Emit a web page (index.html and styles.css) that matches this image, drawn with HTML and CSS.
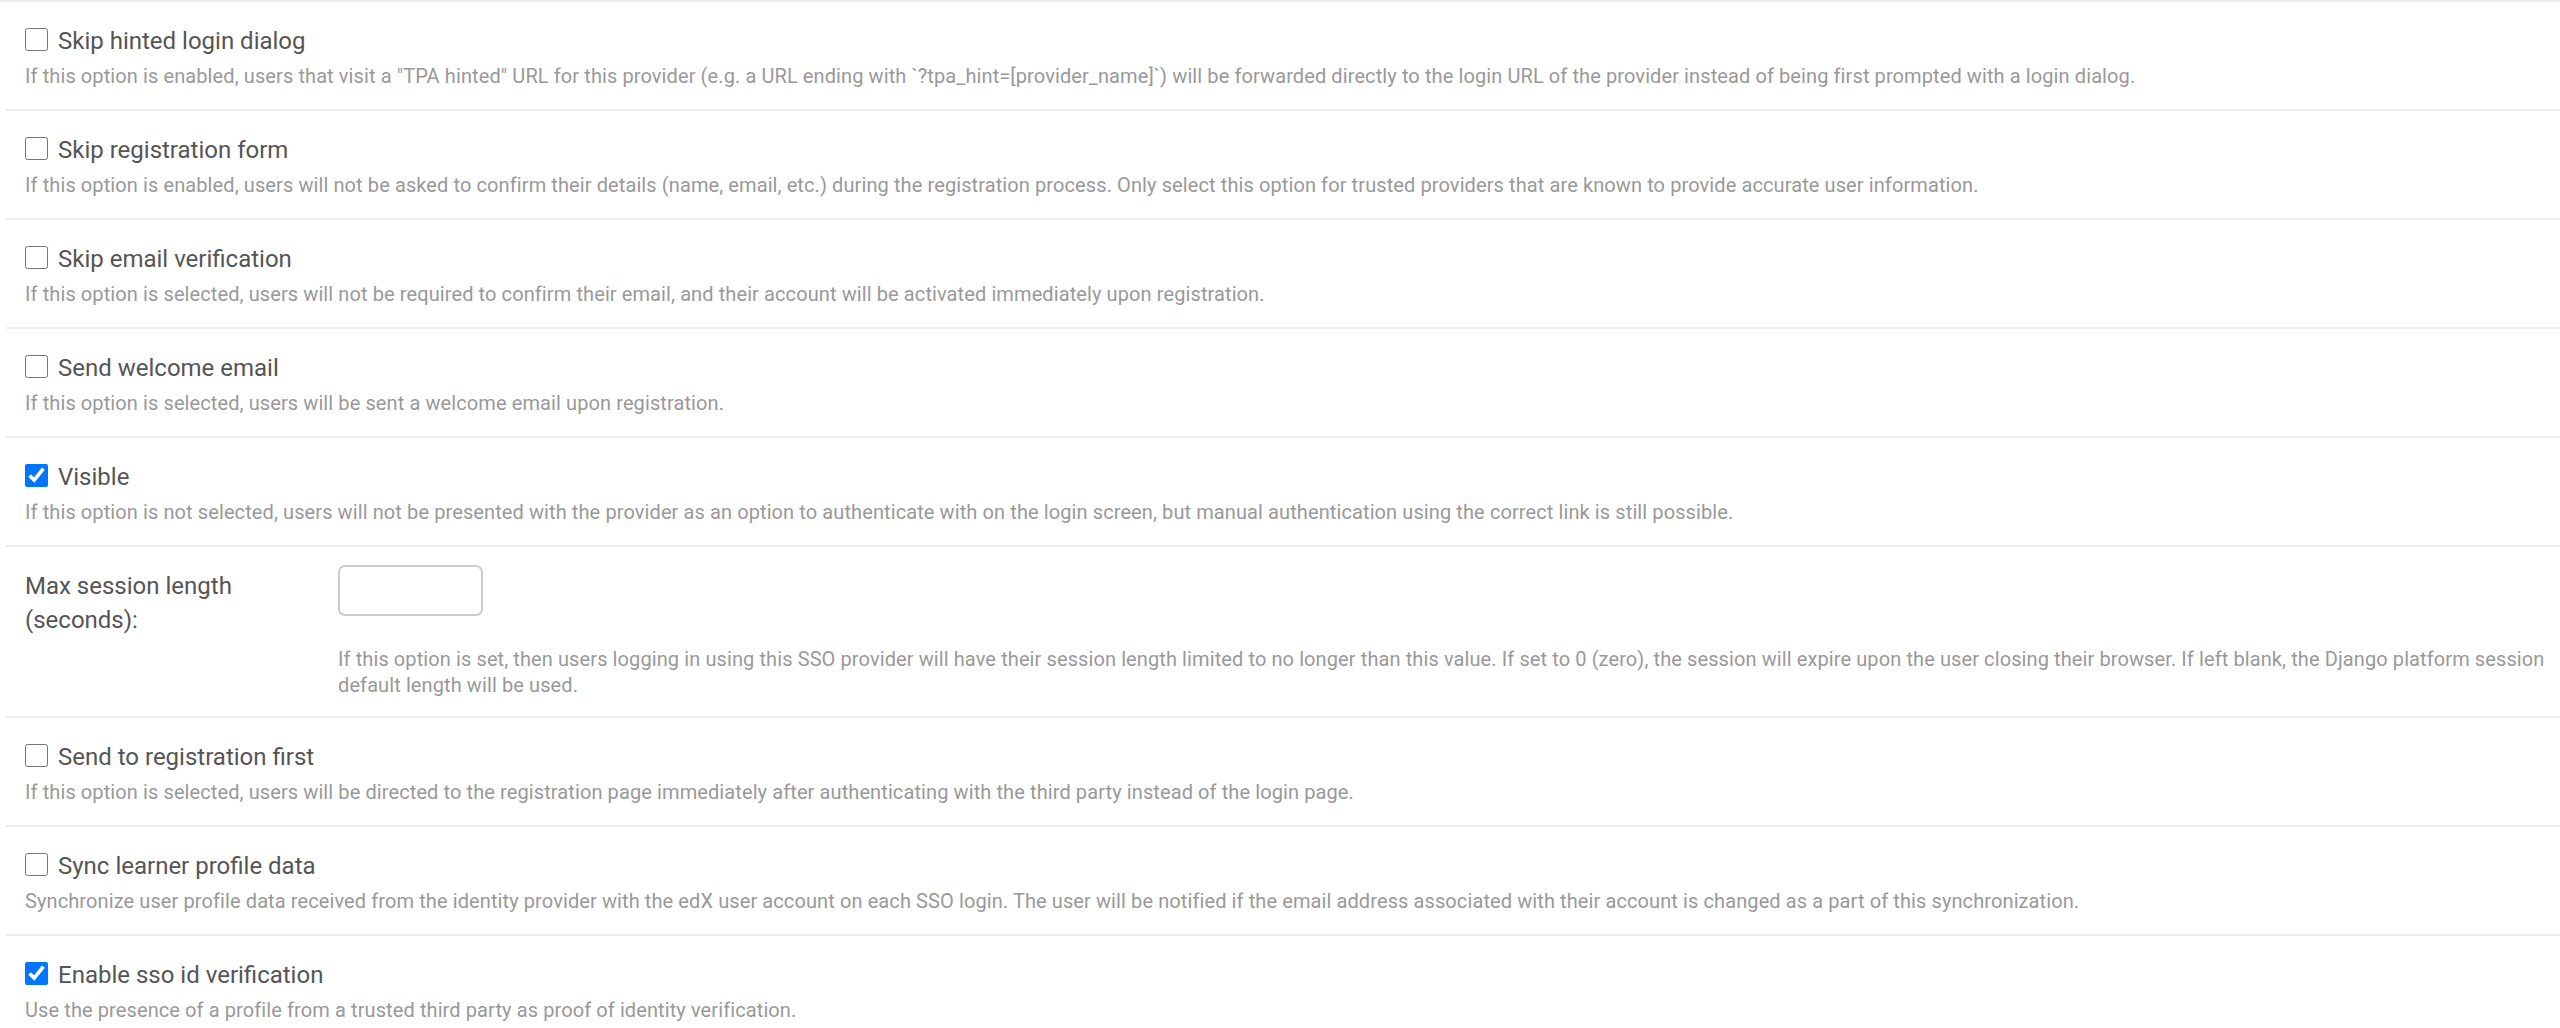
FILE: index.html
```html
<!DOCTYPE html>
<html lang="en">
  <head>
    <meta charset="UTF-8" />
    <title>Provider options</title>
    <link rel="stylesheet" href="styles.css">
  </head>
  <body>
    <fieldset class="module">
      <div class="form-row">
        <div class="check-line">
          <input type="checkbox" id="id_skip_hinted_login_dialog" />
          <label for="id_skip_hinted_login_dialog">Skip hinted login dialog</label>
        </div>
        <div class="help">If this option is enabled, users that visit a "TPA hinted" URL for this provider (e.g. a URL ending with `?tpa_hint=[provider_name]`) will be forwarded directly to the login URL of the provider instead of being first prompted with a login dialog.</div>
      </div>

      <div class="form-row">
        <div class="check-line">
          <input type="checkbox" id="id_skip_registration_form" />
          <label for="id_skip_registration_form">Skip registration form</label>
        </div>
        <div class="help">If this option is enabled, users will not be asked to confirm their details (name, email, etc.) during the registration process. Only select this option for trusted providers that are known to provide accurate user information.</div>
      </div>

      <div class="form-row">
        <div class="check-line">
          <input type="checkbox" id="id_skip_email_verification" />
          <label for="id_skip_email_verification">Skip email verification</label>
        </div>
        <div class="help">If this option is selected, users will not be required to confirm their email, and their account will be activated immediately upon registration.</div>
      </div>

      <div class="form-row">
        <div class="check-line">
          <input type="checkbox" id="id_send_welcome_email" />
          <label for="id_send_welcome_email">Send welcome email</label>
        </div>
        <div class="help">If this option is selected, users will be sent a welcome email upon registration.</div>
      </div>

      <div class="form-row">
        <div class="check-line">
          <input type="checkbox" id="id_visible" checked />
          <label for="id_visible">Visible</label>
        </div>
        <div class="help">If this option is not selected, users will not be presented with the provider as an option to authenticate with on the login screen, but manual authentication using the correct link is still possible.</div>
      </div>

      <div class="form-row field-row">
        <label class="field-label" for="id_max_session_length">Max session length (seconds):</label>
        <div class="field-body">
          <input type="text" class="num-input" id="id_max_session_length" />
          <div class="help">If this option is set, then users logging in using this SSO provider will have their session length limited to no longer than this value. If set to 0 (zero), the session will expire upon the user closing their browser. If left blank, the Django platform session default length will be used.</div>
        </div>
      </div>

      <div class="form-row">
        <div class="check-line">
          <input type="checkbox" id="id_send_to_registration_first" />
          <label for="id_send_to_registration_first">Send to registration first</label>
        </div>
        <div class="help">If this option is selected, users will be directed to the registration page immediately after authenticating with the third party instead of the login page.</div>
      </div>

      <div class="form-row">
        <div class="check-line">
          <input type="checkbox" id="id_sync_learner_profile_data" />
          <label for="id_sync_learner_profile_data">Sync learner profile data</label>
        </div>
        <div class="help">Synchronize user profile data received from the identity provider with the edX user account on each SSO login. The user will be notified if the email address associated with their account is changed as a part of this synchronization.</div>
      </div>

      <div class="form-row">
        <div class="check-line">
          <input type="checkbox" id="id_enable_sso_id_verification" checked />
          <label for="id_enable_sso_id_verification">Enable sso id verification</label>
        </div>
        <div class="help">Use the presence of a profile from a trusted third party as proof of identity verification.</div>
      </div>
    </fieldset>
  </body>
</html>
```

FILE: styles.css
```css
body {
  margin: 0;
  background: #fff;
  font-family: Roboto, "Liberation Sans", sans-serif;
  color: #555;
}
.module {
  margin: 0;
  padding: 0;
  border: none;
  border-top: 2px solid #eee;
}
.form-row {
  margin-left: 6px;
  padding: 22px 0 20px 19px;
  border-bottom: 2px solid #eee;
}
.check-line {
  display: flex;
  align-items: center;
  height: 34px;
}
.check-line input[type="checkbox"] {
  width: 23px;
  height: 23px;
  margin: -4px 10px 0 0;
}
.check-line label {
  font-size: 24px;
  line-height: 34px;
  color: #555;
}
.help {
  margin-top: 6px;
  font-size: 20px;
  line-height: 25px;
  letter-spacing: 0.1px;
  color: #999;
}
.field-row {
  display: flex;
  padding-bottom: 18px;
}
.field-label {
  flex: 0 0 263px;
  padding-right: 50px;
  font-size: 24px;
  line-height: 34px;
  color: #555;
}
.field-body {
  flex: 1;
  padding-right: 8px;
}
.num-input {
  display: block;
  box-sizing: border-box;
  width: 145px;
  height: 51px;
  margin-top: -4px;
  border: 2px solid #ccc;
  border-radius: 7px;
  background: #fff;
}
.field-body .help {
  margin-top: 30px;
  line-height: 26px;
}
```
